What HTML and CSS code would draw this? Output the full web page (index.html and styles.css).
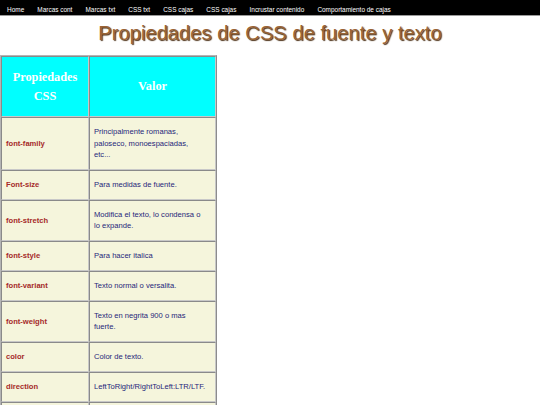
FILE: index.html
```html
<!DOCTYPE html>
<html lang="es">
<head>
<meta charset="utf-8">
<title>Propiedades de CSS de fuente y texto</title>
<link rel="stylesheet" href="styles.css">
</head>
<body>
<nav class="menu">
  <ul class="menu-list">
    <li><a href="#">Home</a></li>
    <li><a href="#">Marcas cont</a></li>
    <li><a href="#">Marcas txt</a></li>
    <li><a href="#">CSS txt</a></li>
    <li><a href="#">CSS cajas</a></li>
    <li><a href="#">CSS cajas</a></li>
    <li><a href="#">Incrustar contenido</a></li>
    <li><a href="#">Comportamiento de cajas</a></li>
  </ul>
</nav>
<h1 class="title">Propiedades de CSS de fuente y texto</h1>
<table class="props">
  <thead>
    <tr>
      <th class="col-prop">Propiedades CSS</th>
      <th class="col-val">Valor</th>
    </tr>
  </thead>
  <tbody>
    <tr><td class="prop">font-family</td><td class="val">Principalmente romanas, paloseco, monoespaciadas, etc...</td></tr>
    <tr><td class="prop">Font-size</td><td class="val">Para medidas de fuente.</td></tr>
    <tr><td class="prop">font-stretch</td><td class="val">Modifica el texto, lo condensa o lo expande.</td></tr>
    <tr><td class="prop">font-style</td><td class="val">Para hacer italica</td></tr>
    <tr><td class="prop">font-variant</td><td class="val">Texto normal o versalita.</td></tr>
    <tr><td class="prop">font-weight</td><td class="val">Texto en negrita 900 o mas fuerte.</td></tr>
    <tr><td class="prop">color</td><td class="val">Color de texto.</td></tr>
    <tr><td class="prop">direction</td><td class="val">LeftToRight/RightToLeft:LTR/LTF.</td></tr>
    <tr class="empty-row"><td class="prop"></td><td class="val"></td></tr>
  </tbody>
</table>
</body>
</html>
```

FILE: styles.css
```css
html, body {
  margin: 0;
  padding: 0;
  background: #ffffff;
}
body {
  font-family: "Liberation Sans", Arial, sans-serif;
}
.menu {
  background: #000000;
  border-bottom: 1px solid #9a9a9a;
  height: 15px;
}
.menu-list {
  list-style: none;
  margin: 0;
  padding: 0 0 0 0.5px;
  display: flex;
  height: 15px;
  align-items: center;
}
.menu-list li {
  padding: 0 6.55px;
}
.menu-list a {
  color: #ffffff;
  text-decoration: none;
  font-size: 6.45px;
  line-height: 15px;
}
.title {
  margin: 6px 0 10px;
  text-align: center;
  font-family: "Liberation Sans", Arial, sans-serif;
  font-weight: normal;
  font-size: 20.2px;
  line-height: 23px;
  color: #9a6436;
  text-shadow: 1px 1px 1px #4a2e14;
}
.props {
  border-collapse: separate;
  border-spacing: 0;
  border: 1px solid #b4b4b4;
  border-right-color: #8c8c8c;
  border-bottom-color: #8c8c8c;
}
.props th,
.props td {
  border: 1px solid #a0a0a0;
  border-top-color: #8a8a8a;
  border-left-color: #8a8a8a;
  border-right-color: #c8c8c8;
  border-bottom-color: #c8c8c8;
}
.props th {
  background: #00ffff;
  color: #ffffff;
  font-family: "Liberation Serif", "Times New Roman", serif;
  font-weight: bold;
  font-size: 12.3px;
  line-height: 19px;
  padding: 10.5px 4px;
  text-align: center;
}
.col-prop {
  width: 78px;
}
.col-val {
  width: 114px;
}
.props td {
  background: #f5f5dc;
  font-size: 7.6px;
  line-height: 11.25px;
  padding: 8.375px 4px;
  vertical-align: middle;
  text-align: left;
}
.props td.val {
  padding-right: 10px;
  width: 108px;
}
.empty-row td {
  height: 11.25px;
}
.prop {
  color: #a52a2a;
  font-weight: bold;
}
.val {
  color: #1f1f7a;
}
```
